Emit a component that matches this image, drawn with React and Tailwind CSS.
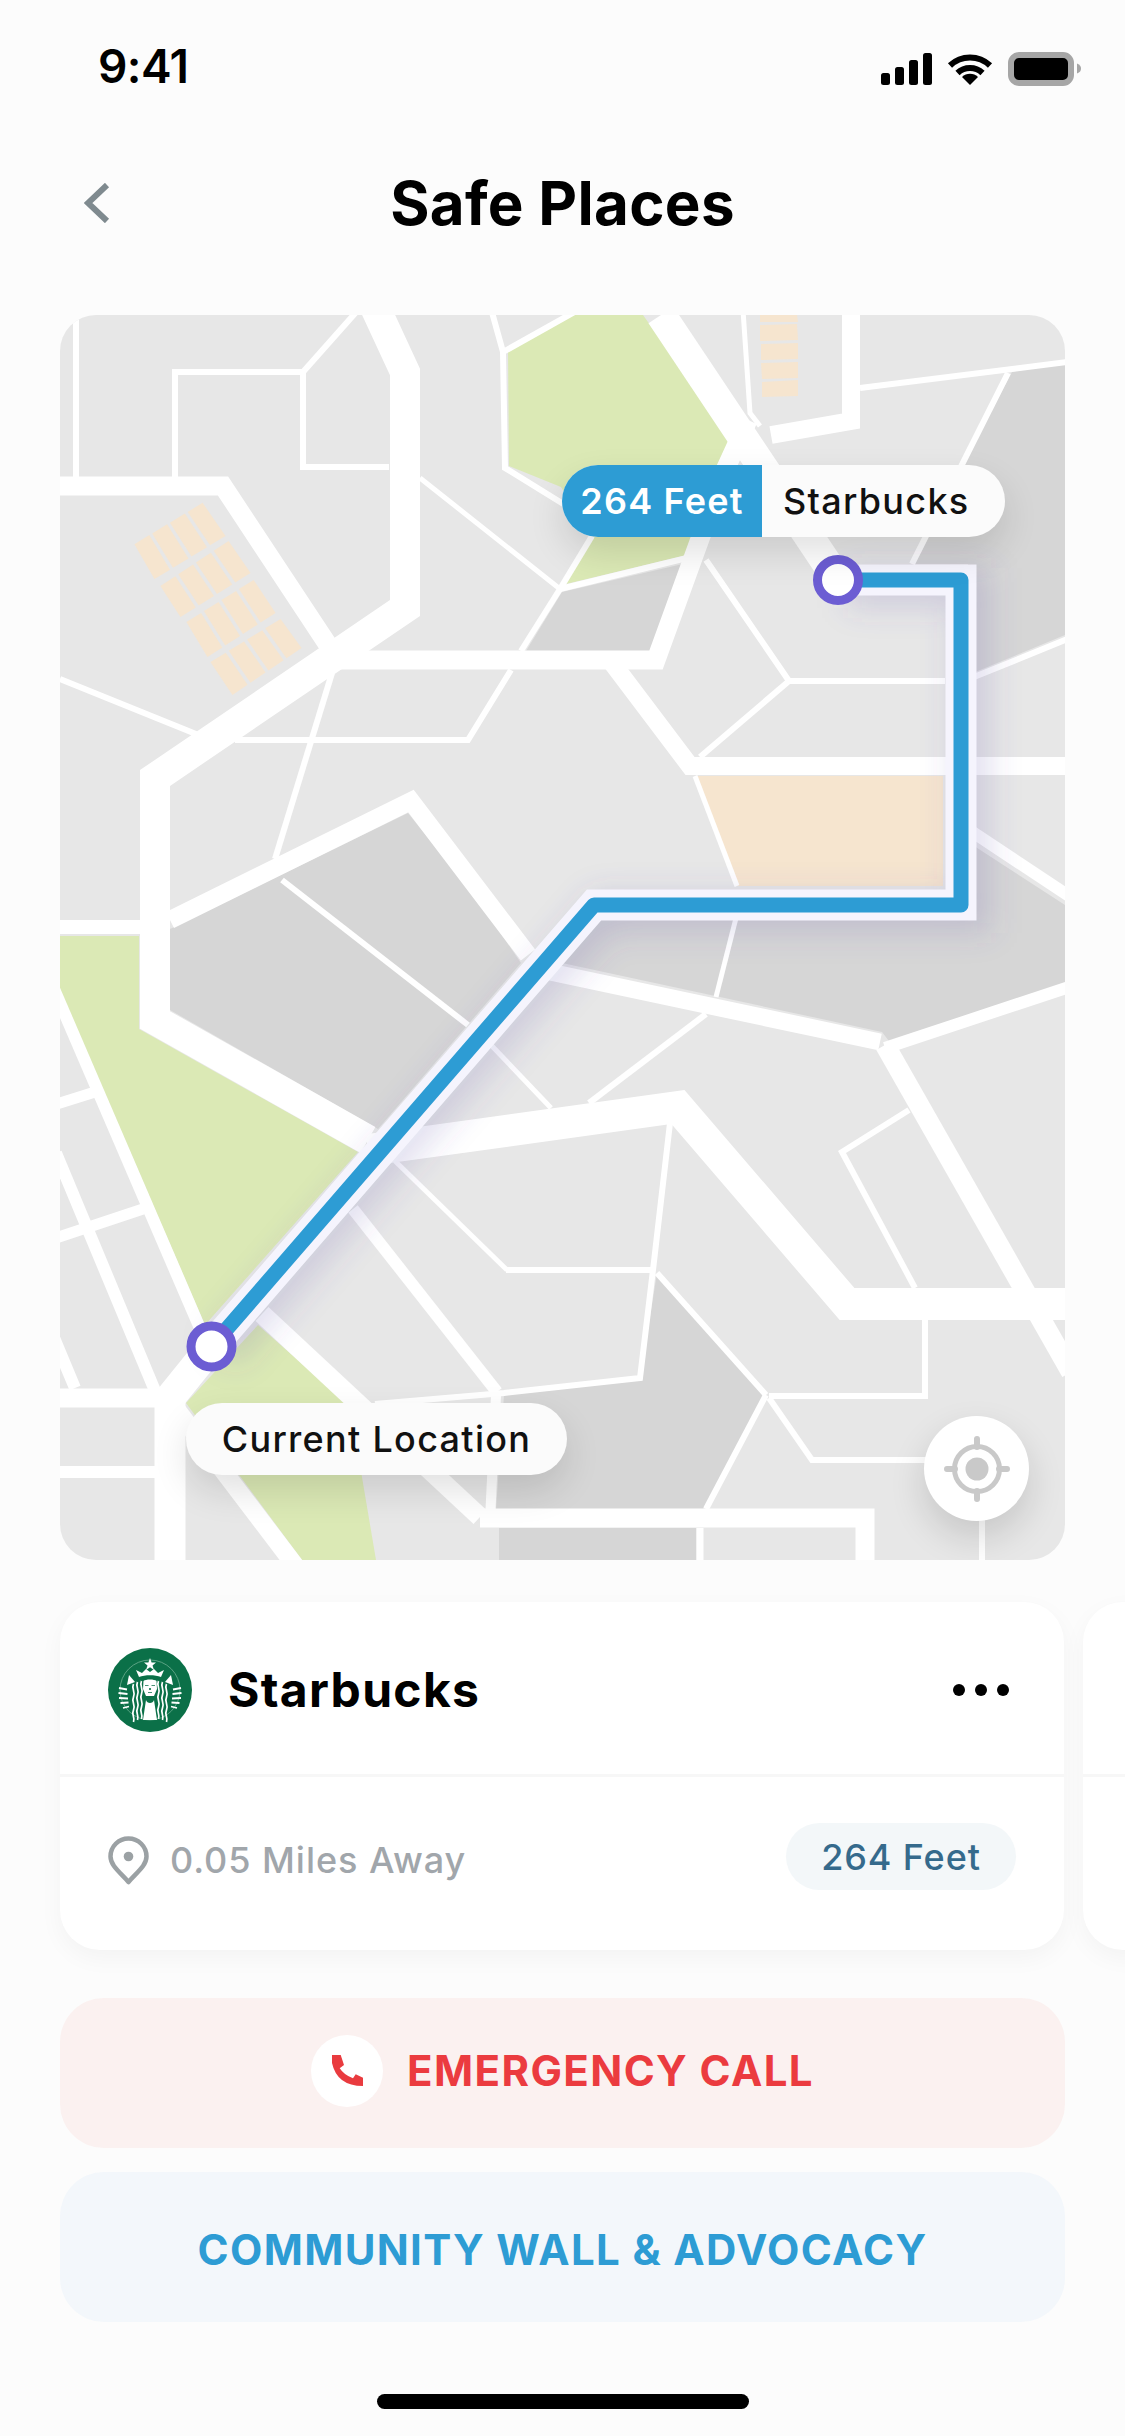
import React from 'react';

const FONT = 'font-["Inter","Noto_Sans",sans-serif]';

const GREEN = '#dbe9b5';
const DARK = '#d6d6d6';
const ORANGE = '#f6e5cf';

const areas = [
  // dark blocks
  [DARK, '562,592 687,563 650,651 526,651'],
  [DARK, '1012,372 1065,362 1065,635 968,675 968,564 912,564'],
  [DARK, '600,918 968,918 968,842 1065,905 1065,985 892,1045 882,1032 562,963'],
  [DARK, '408,813 478,900 521,963 378,1129 170,1010 170,929'],
  [DARK, '657,1273 766,1395 703,1509 496,1509 504,1395 640,1380'],
  [DARK, '499,1528 696,1528 696,1560 499,1560'],
  // parks
  [GREEN, '508,350 574,315 643,315 735,445 696,537 691,554 566,584 592,536 561,487 509,466'],
  [GREEN, '60,936 139,936 139,1029 358,1152 205,1325 60,990'],
  [GREEN, '258,1325 350,1406 376,1560 302,1560 186,1403'],
  // big orange lot
  [ORANGE, '695,776 943,776 943,886 737,886'],
  [ORANGE, '760,315 797,315 798,322 760,322'],
  [ORANGE, '760,325 797,324 798,340 760,341'],
  [ORANGE, '761,344 798,343 798,359 761,360'],
  [ORANGE, '761,363 798,362 798,378 762,379'],
  [ORANGE, '762,382 798,380 798,396 762,397'],
];

// corners of the four rows of small lots, top-left of the map
const lotRows = [
  [[133, 545], [204, 502], [227, 535], [153, 580]],
  [[159, 587], [230, 540], [252, 572], [179, 618]],
  [[185, 623], [255, 579], [277, 612], [206, 658]],
  [[209, 663], [282, 618], [303, 647], [231, 696]],
];

function lerp(a, b, t) {
  return [a[0] + (b[0] - a[0]) * t, a[1] + (b[1] - a[1]) * t];
}

const lots = lotRows.flatMap(([a, b, c, d]) =>
  [0, 1, 2, 3].map((i) => {
    const t0 = i / 4 + 0.02;
    const t1 = (i + 1) / 4 - 0.02;
    return [lerp(a, b, t0), lerp(a, b, t1), lerp(d, c, t1), lerp(d, c, t0)].map((p) => p.join(',')).join(' ');
  }),
);

const roads = [
  // thick roads
  [30, '374,305 405,372 405,608 155,778 155,1020 368,1140'],
  [32, '368,1150 678,1107 847,1304 1075,1304'],
  [30, '661,315 838,580'],
  [30, '212,1346 170,1398'],
  [31, '170,1398 170,1570'],
  [19, '50,1398 170,1398'],
  [12, '50,1472 170,1472'],
  [19, '50,486 223,486 330,648'],
  [19, '340,660 656,660 725,470 748,420'],
  [18, '610,660 690,766 1075,766'],
  [18, '771,435 851,421 851,305'],
  [18, '170,920 411,801 528,955'],
  [14, '60,927 155,927'],
  [17, '550,972 880,1042'],
  [12, '885,1048 1075,985'],
  [20, '885,1045 1071,1372'],
  [12, '971,831 1075,900'],
  [19, '262,1314 480,1517'],
  [19, '480,1518 865,1518 865,1570'],
  [18, '177,1410 300,1572'],
  // thin streets
  [12, '48,975 205,1340'],
  [12, '56,1153 158,1398'],
  [12, '52,1333 75,1388'],
  [11, '50,1106 95,1092'],
  [11, '50,1240 143,1209'],
  [6, '76,310 76,477'],
  [6, '175,477 175,372 303,372 303,467 389,467'],
  [6, '303,372 358,310'],
  [5, '420,478 560,589'],
  [6, '560,589 592,536'],
  [6, '560,589 521,651'],
  [6, '560,589 691,557'],
  [6, '490,305 503,352 505,468 565,505'],
  [6, '503,352 578,310'],
  [5, '743,310 750,413 760,426'],
  [6, '706,560 789,681 945,681'],
  [6, '789,681 700,757'],
  [6, '1008,373 912,564'],
  [6, '860,388 1075,361'],
  [6, '974,677 1075,636'],
  [5, '695,776 737,886'],
  [5, '736,918 716,997'],
  [6, '706,1014 589,1103'],
  [5, '491,1045 551,1108'],
  [6, '282,880 468,1025'],
  [6, '332,673 275,859'],
  [6, '235,740 468,740 511,670'],
  [6, '60,679 196,734'],
  [6, '670,1123 653,1270 640,1378 504,1393 375,1404'],
  [6, '506,1270 653,1270'],
  [5, '395,1161 507,1270'],
  [12, '353,1209 497,1392'],
  [10, '496,1395 490,1520'],
  [6, '909,1110 842,1152 915,1288'],
  [6, '925,1320 925,1396 769,1396'],
  [6, '657,1273 766,1395'],
  [6, '766,1395 706,1509'],
  [6, '769,1398 812,1460 930,1460'],
  [6, '982,1520 982,1570'],
  [7, '700,1528 700,1570'],
];

const ROUTE = '838,580 961,580 961,905 594,905 212,1346';

function MapArt() {
  return (
    <svg className="block" width="1005" height="1245" viewBox="60 315 1005 1245" aria-hidden="true">
      <defs>
        <filter id="routeGlow" x="-20%" y="-20%" width="140%" height="140%">
          <feGaussianBlur stdDeviation="15" />
        </filter>
      </defs>
      <rect x="60" y="315" width="1005" height="1245" fill="#e7e7e7" />
      {areas.map(([fill, points]) => (
        <polygon key={points} fill={fill} points={points} />
      ))}
      {lots.map((points) => (
        <polygon key={points} fill={ORANGE} points={points} />
      ))}
      {roads.map(([width, points]) => (
        <polyline key={points} points={points} fill="none" stroke="#ffffff" strokeWidth={width} strokeLinejoin="miter" />
      ))}
      <polyline points={ROUTE} transform="translate(10 8)" fill="none" stroke="#5a50a8" strokeOpacity="0.17" strokeWidth="40" filter="url(#routeGlow)" />
      <polyline points={ROUTE} fill="none" stroke="#f5f4fd" strokeWidth="31" strokeLinejoin="miter" />
      <polyline points={ROUTE} fill="none" stroke="#2d9cd4" strokeWidth="15" strokeLinejoin="round" />
      <circle cx="838" cy="580" r="20.5" fill="#ffffff" stroke="#6c5dd3" strokeWidth="9" />
      <circle cx="211.5" cy="1346.5" r="20.5" fill="#ffffff" stroke="#6c5dd3" strokeWidth="9" />
    </svg>
  );
}

function StatusIcons() {
  return (
    <svg width="200" height="34" viewBox="881 52 200 34" aria-hidden="true">
      <rect x="881" y="73" width="9" height="12" rx="2.5" />
      <rect x="895" y="67" width="9" height="18" rx="2.5" />
      <rect x="909" y="60" width="9" height="25" rx="2.5" />
      <rect x="923" y="53" width="9" height="32" rx="2.5" />
      <g transform="translate(947 52)">
        <path d="M3 13.5A29 29 0 0 1 43 13.5" fill="none" stroke="#000" strokeWidth="6" strokeLinecap="butt" />
        <path d="M10.5 21A18 18 0 0 1 35.5 21" fill="none" stroke="#000" strokeWidth="6" />
        <path d="M23 33L15 25A11.5 11.5 0 0 1 31 25Z" />
      </g>
      <rect x="1011" y="55" width="60" height="28" rx="8" fill="#000" stroke="#a6a6a6" strokeWidth="6" />
      <path d="M1077 63.5c3 1 4 3 4 5s-1 4-4 5z" fill="#a6a6a6" />
    </svg>
  );
}

function StarbucksLogo() {
  const wave = 'M0 0c-2.500 5 2.500 8 0 13s2.500 8 0 13s2 7 0 12';
  return (
    <svg width="84" height="84" viewBox="0 0 84 84" aria-hidden="true">
      <circle cx="42" cy="42" r="42" fill="#0b7048" />
      <circle cx="42" cy="42" r="30" fill="none" stroke="#6fae92" strokeWidth="0.8" />
      <polygon fill="#fff" points="42,10 43.600,14.500 48,14.500 44.500,17.500 46,22 42,19.200 38,22 39.500,17.500 36,14.500 40.400,14.500" />
      <path fill="#fff" d="M28 22l6 3 4-4 4 3 4-3 4 4 6-3-3 7c-6-2.500-16-2.500-22 0z" />
      <path fill="#fff" d="M35.500 33c2-2 11-2 13 0l.500 8-3 7h-8l-3-7z" />
      <path fill="#0b7048" d="M37 37h3.500v.800H37zM43.500 37H47v.800h-3.500zM41.200 40h1.600v2h-1.600zM40 44h4v.800h-4z" />
      <path fill="#fff" d="M38 52c1 4 7 4 8 0l3 20H35z" />
      <g fill="none" stroke="#fff" strokeWidth="1.700">
        <path d={wave} transform="translate(33.500 33)" />
        <path d={wave} transform="translate(29.500 34)" />
        <path d={wave} transform="translate(25.500 36)" />
        <path d={wave} transform="translate(50.500 33)" />
        <path d={wave} transform="translate(54.500 34)" />
        <path d={wave} transform="translate(58.500 36)" />
      </g>
      <g fill="none" stroke="#fff" strokeWidth="1.800">
        <path d="M11 40l8 1.500M10.500 45l9 1M11 50l9 .500M12.500 55l8-.500M15 60l6-1.500" />
        <path d="M73 40l-8 1.500M73.500 45l-9 1M73 50l-9 .500M71.500 55l-8-.500M69 60l-6-1.500" />
      </g>
      <polygon fill="#fff" points="21,27 27,34 19,37" />
      <polygon fill="#fff" points="63,27 57,34 65,37" />
    </svg>
  );
}

export default function App() {
  return (
    <div className={`flex h-[2436px] w-[1125px] flex-col overflow-hidden bg-[#fcfcfc] ${FONT}`}>
      <div className="flex h-[86px] items-end justify-between pl-[98px] pr-[44px]">
        <span className="-mb-[3px] text-[46px] leading-[46px] font-semibold tracking-[-0.6px] text-black">9:41</span>
        <StatusIcons />
      </div>

      <div className="mt-[87px] grid h-[60px] grid-cols-[1fr_auto_1fr] items-center">
        <svg className="ml-[84px]" width="26" height="40" viewBox="0 0 26 40" aria-hidden="true">
          <path d="M23 2L4 20l19 18" fill="none" stroke="#7f8a8f" strokeWidth="6" />
        </svg>
        <h1 className="text-[60px] leading-[60px] font-bold tracking-[0.3px] text-black">Safe Places</h1>
        <span />
      </div>

      <div className="relative mx-[60px] mt-[82px] h-[1245px] w-[1005px] overflow-hidden rounded-[36px]">
        <MapArt />
        <div className="absolute left-[502px] top-[150px] flex h-[72px] overflow-hidden rounded-full bg-[#fbfbfb] shadow-[0_16px_36px_rgba(0,0,0,0.12)]">
          <span className="flex w-[200px] items-center justify-center bg-[#2d9cd4] text-[36px] font-semibold tracking-[1.2px] text-white">264 Feet</span>
          <span className="flex w-[243px] items-center pl-[21px] text-[36px] font-medium tracking-[1.3px] text-[#111]">Starbucks</span>
        </div>
        <div className="absolute left-[126px] top-[1088px] flex h-[72px] w-[381px] items-center justify-center rounded-full bg-[#fbfbfb] text-[36px] font-medium tracking-[1.3px] text-[#111] shadow-[0_16px_36px_rgba(0,0,0,0.12)]">
          Current Location
        </div>
        <div className="absolute left-[864px] top-[1101px] flex h-[105px] w-[105px] items-center justify-center rounded-full bg-white shadow-[0_16px_36px_rgba(0,0,0,0.14)]">
          <svg width="66" height="66" viewBox="0 0 66 66" aria-hidden="true">
            <circle cx="33" cy="33" r="22.500" fill="none" stroke="#c9c9c9" strokeWidth="5" />
            <circle cx="33" cy="33" r="11.500" fill="#c9c9c9" />
            <path d="M33 3v8M33 55v8M3 33h8M55 33h8" stroke="#c9c9c9" strokeWidth="6" strokeLinecap="round" />
          </svg>
        </div>
      </div>

      <div className="mt-[42px] flex gap-[19px] pl-[60px]">
        <div className="h-[348px] w-[1004px] shrink-0 rounded-[40px] bg-white shadow-[0_8px_24px_rgba(0,0,0,0.04)]">
          <div className="flex h-[175px] items-center border-b-[3px] border-[#f7f7f7] pt-[3px] pl-[48px] pr-[55px]">
            <StarbucksLogo />
            <span className="ml-[36px] text-[48px] font-bold tracking-[1.3px] text-black">Starbucks</span>
            <span className="ml-auto flex gap-[10px]">
              <span className="h-[12px] w-[12px] rounded-full bg-black" />
              <span className="h-[12px] w-[12px] rounded-full bg-black" />
              <span className="h-[12px] w-[12px] rounded-full bg-black" />
            </span>
          </div>
          <div className="flex h-[173px] items-center pb-[7px] pl-[48px] pr-[48px]">
            <svg width="41" height="49" viewBox="0 0 41 49" aria-hidden="true">
              <path d="M20.500 46C13 37 2.500 30 2.500 20.500a18 18 0 0 1 36 0C38.500 30 28 37 20.500 46z" fill="none" stroke="#9ba1a4" strokeWidth="4.500" strokeLinejoin="round" />
              <circle cx="20.500" cy="20.500" r="4.800" fill="#9ba1a4" />
            </svg>
            <span className="ml-[21px] text-[36px] font-medium tracking-[0.95px] text-[#a1a6ab]">0.05 Miles Away</span>
            <span className="mb-[7px] ml-auto flex h-[67px] w-[230px] items-center justify-center rounded-full bg-[#f3f7f9] text-[36px] font-medium tracking-[0.9px] text-[#356a8c]">264 Feet</span>
          </div>
        </div>
        <div className="h-[348px] w-[1004px] shrink-0 rounded-[40px] bg-white shadow-[0_8px_24px_rgba(0,0,0,0.04)]">
          <div className="h-[175px] border-b-[3px] border-[#f7f7f7]" />
        </div>
      </div>

      <div className="mx-[60px] mt-[48px] flex h-[150px] items-center justify-center rounded-[44px] bg-[#fbf1f0] pb-[5px]">
        <span className="flex h-[72px] w-[72px] items-center justify-center rounded-full bg-white">
          <svg width="31" height="31" viewBox="0 0 31 31" aria-hidden="true">
            <path d="M0 0H8.700L12 10L7.700 13.300Q12 20 21 23.300L23.700 19.300L31 22.700V31Q5 31 0 8Z" fill="#e93b3f" />
          </svg>
        </span>
        <span className="ml-[24px] text-[42px] font-bold tracking-[1.4px] text-[#eb3b3f]">EMERGENCY CALL</span>
      </div>
      <div className="mx-[60px] mt-[24px] flex h-[150px] items-center justify-center rounded-[44px] bg-[#f3f7fb] pt-[5px]">
        <span className="text-[42px] font-bold tracking-[1.35px] text-[#2d9cd4]">COMMUNITY WALL &amp; ADVOCACY</span>
      </div>

      <div className="mx-auto mt-[72px] h-[15px] w-[372px] rounded-full bg-black" />
    </div>
  );
}
